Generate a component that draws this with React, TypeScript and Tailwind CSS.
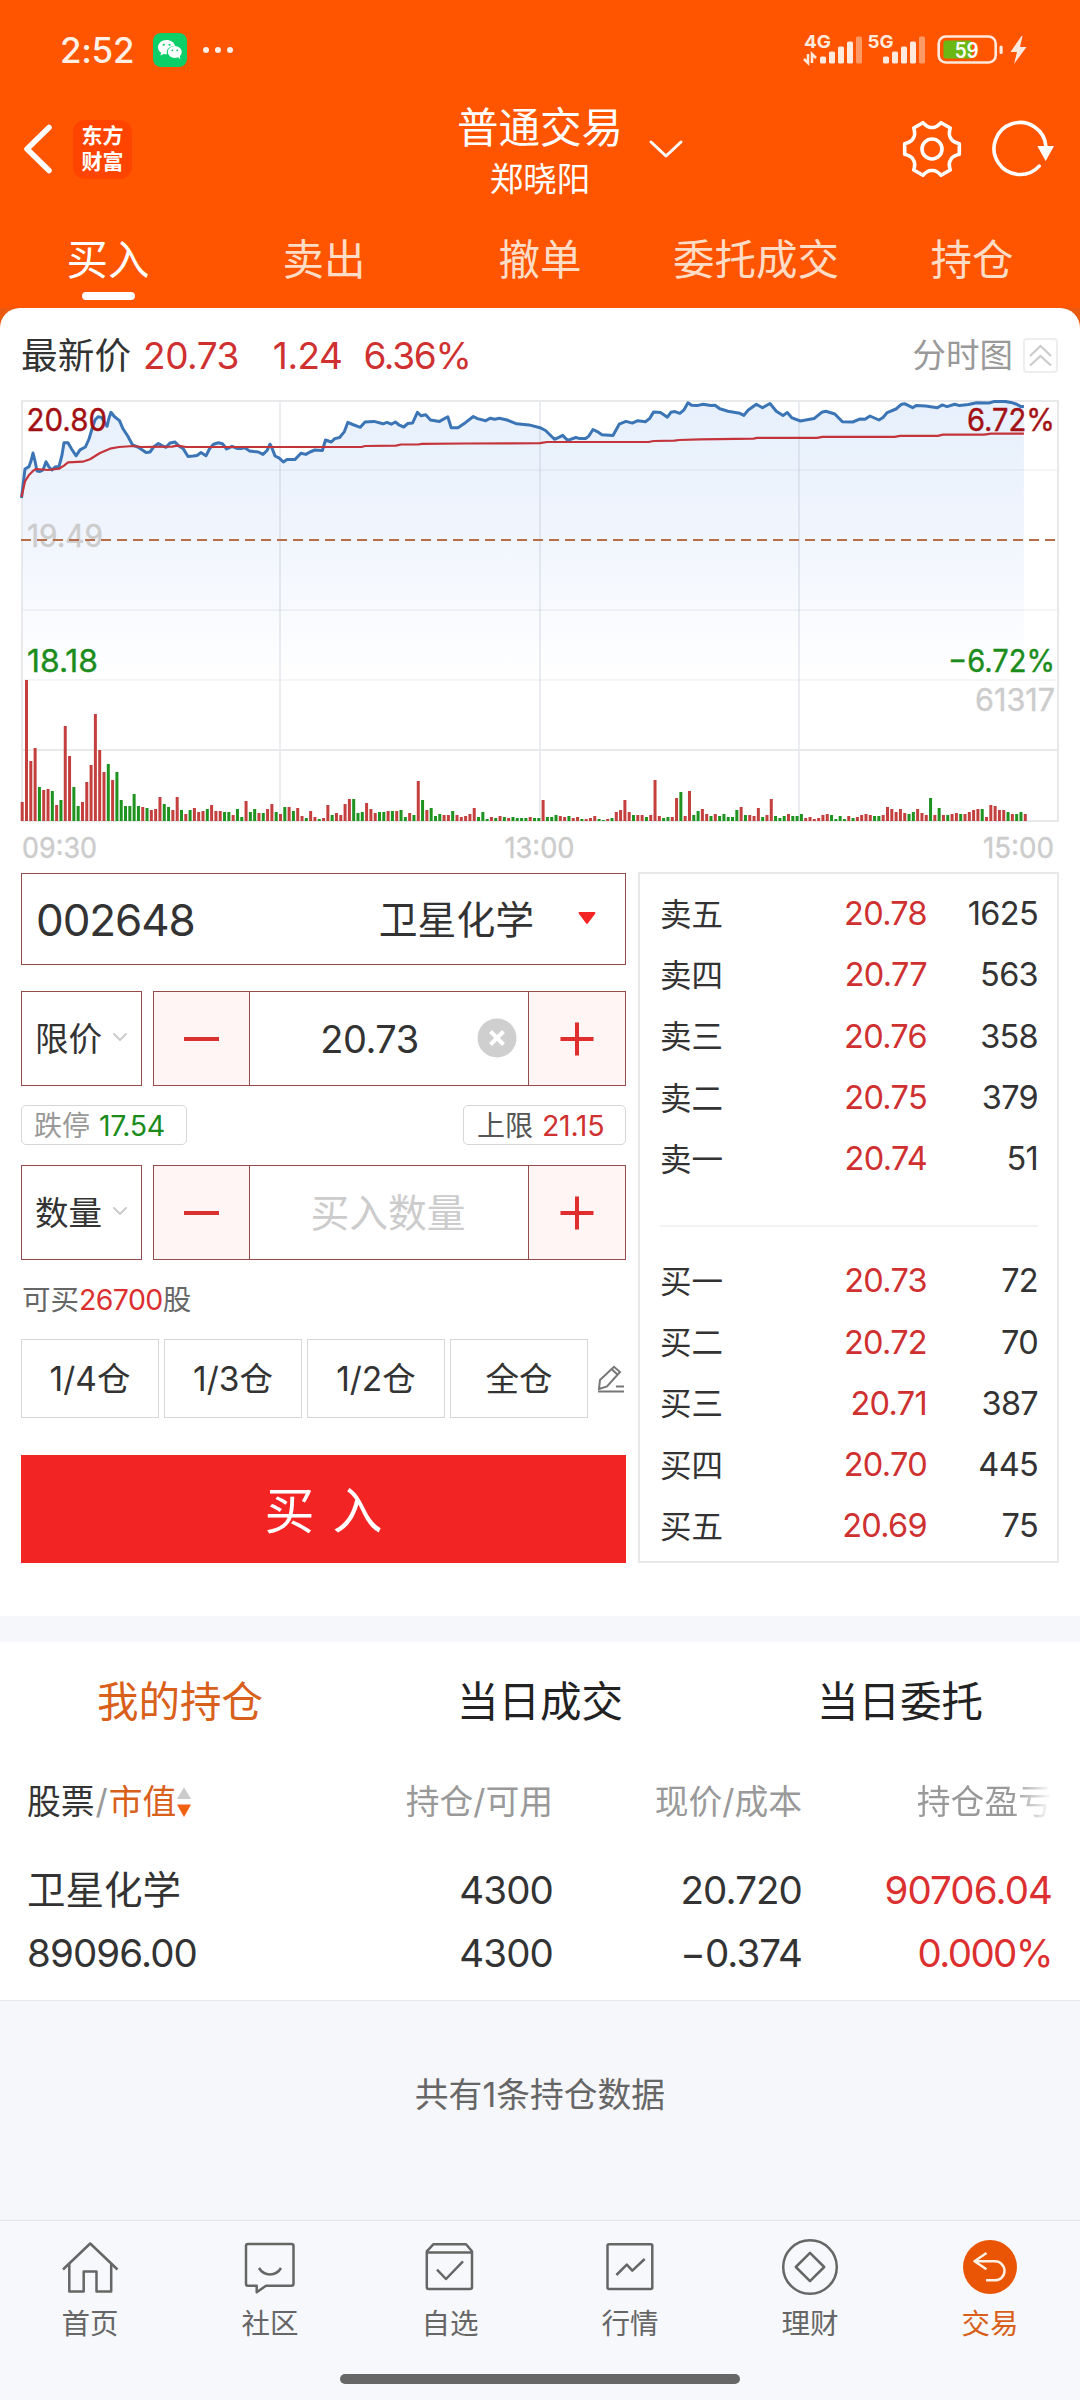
import React, { useState } from 'react';
import clsx from 'clsx';

interface Quote {
  label: string;
  price: string;
  volume: string;
}

const TABS = ['买入', '卖出', '撤单', '委托成交', '持仓'];

const SELLS: Quote[] = [
  { label: '卖五', price: '20.78', volume: '1625' },
  { label: '卖四', price: '20.77', volume: '563' },
  { label: '卖三', price: '20.76', volume: '358' },
  { label: '卖二', price: '20.75', volume: '379' },
  { label: '卖一', price: '20.74', volume: '51' },
];

const BUYS: Quote[] = [
  { label: '买一', price: '20.73', volume: '72' },
  { label: '买二', price: '20.72', volume: '70' },
  { label: '买三', price: '20.71', volume: '387' },
  { label: '买四', price: '20.70', volume: '445' },
  { label: '买五', price: '20.69', volume: '75' },
];

const PRICE_LINE =
  '21.5,498 25,469 29,466.6 31,461 33,453 35,461 37,471 40,471.5 43,470 46,461.7 49,467 52,470 55,467 59,466.6 62,455 64,442.8 68,442.8 71.6,449 76,455.8 80,449.8 85.4,447 89,439 92.3,428 95,420 98,416.8 101.6,417.5 104.7,422.4 107,426.3 109,418 111,412.3 114.3,416.5 119.5,420.7 123,428.8 128,436.5 132.6,445 137.8,447 142,449.8 146,452.6 150,452 153.6,447 158.4,443.5 162,445.6 166,447.3 170,443 175,442 178.4,445.6 183,448.4 188,456.5 193,456 197,455.4 201,452.6 206,455.8 209.4,449 213.5,444.2 218.3,442.8 222.5,443.8 226.6,449 232,446.3 237,448.4 241,448.4 245,447.7 249.3,450.9 254,451.6 258.3,452 263,454.4 267,450.5 270,444.2 272,448 275,456 279.3,458.2 283.4,462 287,459.6 294.8,459.6 301,453.3 305.8,454.4 310,452 314.8,450 322.4,450.5 325.5,440 331.3,442 334.8,438.6 339.6,437.5 344.4,431.6 347.8,422.4 352.7,424.5 360.3,427.3 365,422 374,421.4 383,423.8 387,422.4 391.3,424.2 395.4,422 399.5,425.2 403.7,427 407.8,423.5 412.6,423 417.4,412.3 420.9,415.8 425.7,414.7 430.5,420 439.5,421.4 447.8,416.8 451.2,427.7 458,427.7 465.7,422.4 473.3,416.5 477.4,418.6 485.7,420.7 490.5,418.2 494.6,419.3 499.4,418.2 507,420 516.7,423.8 529,424.9 540,427.7 545.5,430.5 554.5,439.3 559.3,437.2 562.7,435.4 567.5,440.3 575.8,437.5 580,438.6 585.5,438.6 589,435.8 593,429.5 597.2,431.6 602,434.7 613,435.4 619.2,424.2 626,421.4 632.3,423.1 637.8,420.7 645.4,421.7 649.5,418.6 653.7,411.9 660.5,412.6 667.4,417.2 670.9,412.3 675,411.6 679.8,413.3 684,409.8 688,402.8 691.5,405.2 697,405.6 703.2,404.2 710.8,405.6 715,405.2 719.8,408.8 728,411.2 739.8,413.3 743.9,415.4 748,410.2 756.3,404.2 762.5,407.7 770,403.5 776.3,411.2 783,415.4 787.3,412.6 792,417.9 800.4,421 814,418.6 821.7,412.3 825.9,411.2 834.8,414 842.4,421.7 852.7,422 860.3,418.9 865,419.3 870,416 878.9,420 883,417.5 887.2,412.6 896,409 901.6,404.2 905,403.8 912.7,407.7 916,405.6 925.7,405.9 937.4,407.7 942.3,404.9 947,406.6 954.7,404.2 959.5,405.6 968.4,404.5 976.7,402.8 989,403 994.6,401.4 1005,401.4 1011,402.4 1016.7,404.2 1020.8,406.6 1023.9,406.6';

const AVERAGE_LINE =
  '21.5,497 25,481.4 29,475 33,470.9 36,469 48,470 59,468.7 64,465.6 68,462.4 82.7,461.7 90,459.3 100,453 110,448.7 119,447 134,446 141,447 172,446.6 177.4,445.6 186,447 361.6,447 365,446 396,445.6 401,444.5 418,444.5 422,443.8 465,443.5 540,443.2 547,442 648.5,442 653.7,441 674.3,440.7 679.5,440 700,439.3 753.5,438.6 757,437.9 817,437.9 822.4,436.8 894.7,436.8 900,435.8 937.8,435.8 943,434.7 984,434.7 991,433.7 1023.9,433.7';

// One bar per minute, positive = up (red), negative = down (green)
const VOLUMES = [
  19, 141, 60, 73, -34, 31, 32, -30, 16, -21, 95, 65, -34, -15, 19, 39, 56, 107, 71, 49,
  -57, 41, -49, -21, -15, -15, -27, -15, 14, -13, 11, 12, 24, -17, -14, 11, 24, -11, 7, -11,
  13, 9, 10, -12, 16, 10, 10, -9, -9, 6, -12, -4, 20, -9, -12, 8, -8, 12, 17, -9,
  7, -14, 14, -10, 13, 5, -3, 10, 4, -2, 3, 16, -6, 8, 6, 17, 22, -22, -8, -9,
  18, 12, 8, -9, -9, 10, -10, 10, -11, -4, 8, -6, 40, -21, 11, -13, -5, -7, 6, 6,
  -10, 6, 4, 5, 7, 13, -4, -9, -2, 4, -3, 5, -4, 3, -4, -3, -3, -3, 4, -3,
  -3, 21, -4, -4, -6, 5, 4, -5, 3, 4, -2, 2, 3, 5, -2, -1, 2, -3, 9, 11,
  21, 9, -6, 6, 6, -4, 6, 41, 5, -3, -4, 4, 23, -29, 5, 30, -6, -10, 12, 7,
  -5, 7, -5, -7, -4, -4, -11, 14, -6, 6, 5, 13, -4, 6, 22, -5, -3, -5, 7, -5,
  -5, -7, 3, 4, 2, 3, 6, 7, -6, -2, -5, -2, 5, -3, 4, 6, 7, 6, -5, -5,
  6, 14, 12, 9, 12, 8, -7, -9, 12, 8, 6, -23, 6, -13, 6, -6, 7, 8, -7, 7,
  9, 11, 12, -12, 4, 16, 15, 11, 11, -9, 7, -7, -9, 7,
];

function SignalBars({ x }: { x: number }) {
  return (
    <g>
      {[7, 12, 17, 22, 27].map((h, i) => (
        <rect key={h} x={x + i * 9} y={63.5 - h} width="6" height={h} rx="1.5" fill="#fff" opacity={i === 4 ? 0.4 : 0.88} />
      ))}
    </g>
  );
}

function StatusBar() {
  return (
    <div className="flex h-[100px] items-center justify-between pl-[60px] pr-[50px]">
      <div className="flex items-center">
        <span className="w-[93px] text-[35px] font-medium leading-[40px] tracking-[-0.3px] text-[#fff0e6]">2:52</span>
        <svg width="34" height="34" viewBox="0 0 34 34">
          <rect width="34" height="34" rx="8" fill="#0ccf67" />
          <path d="M13.5 7C8.8 7 5 10.2 5 14.2c0 2.3 1.2 4.2 3.2 5.5l-.8 2.8 3.2-1.6c1 .3 1.8.4 2.9.4h.6a6 6 0 0 1-.3-1.9c0-3.6 3.4-6.3 7.5-6.3h.8C21.3 9.5 17.8 7 13.5 7z" fill="#fff" />
          <ellipse cx="21.8" cy="19" rx="7" ry="5.9" fill="#fff" />
          <path d="M24 23l3.2 3.2-.5-4z" fill="#fff" />
          <g fill="#0ccf67">
            <circle cx="10.7" cy="11.8" r="1.1" />
            <circle cx="16.5" cy="11.8" r="1.1" />
            <circle cx="19.4" cy="17.3" r="0.9" />
            <circle cx="24.2" cy="17.3" r="0.9" />
          </g>
        </svg>
        <div className="ml-[16px] flex gap-[6px]">
          <i className="h-[6px] w-[6px] rounded-full bg-[#fff0e6]" />
          <i className="h-[6px] w-[6px] rounded-full bg-[#fff0e6]" />
          <i className="h-[6px] w-[6px] rounded-full bg-[#fff0e6]" />
        </div>
      </div>
      <svg width="230" height="40" viewBox="800 30 230 40" className="font-bold">
        <text x="804" y="48" fontSize="18" fill="#ffe9dc" textLength="27" lengthAdjust="spacingAndGlyphs">4G</text>
        <path d="M808 54v9l-4-4M812 63v-9l4 4" fill="none" stroke="#ffe9dc" strokeWidth="2.5" />
        <SignalBars x={820} />
        <text x="867.5" y="48" fontSize="18" fill="#ffe9dc" textLength="26" lengthAdjust="spacingAndGlyphs">5G</text>
        <SignalBars x={883} />
        <rect x="938.7" y="36.5" width="57" height="26" rx="7" fill="none" stroke="#ffe9dc" strokeWidth="2.6" />
        <rect x="943.5" y="40.5" width="28.5" height="18" rx="2.5" fill="#6ab814" />
        <rect x="999.5" y="45.5" width="3.2" height="8.5" rx="1.5" fill="#ffe9dc" />
        <text x="966.7" y="57.5" fontSize="21" fontWeight="600" fill="#fff" textAnchor="middle" textLength="24" lengthAdjust="spacingAndGlyphs">59</text>
        <path d="M1021.5 36l-11 16h6.5l-3 12 12.500-17h-6.500l2.500-11z" fill="#ffe9dc" />
      </svg>
    </div>
  );
}

function polar(r: number, deg: number) {
  const a = (deg * Math.PI) / 180;
  return `${(30 + r * Math.cos(a)).toFixed(2)} ${(30 + r * Math.sin(a)).toFixed(2)}`;
}

// six blunt teeth with a soft dip between them
const GEAR_PATH =
  [0, 60, 120, 180, 240, 300]
    .map((t, i) => `${i === 0 ? 'M' : 'L'}${polar(27.8, t - 11)} L${polar(27.8, t + 11)} C${polar(23.5, t + 16)} ${polar(21.3, t + 22)} ${polar(21.6, t + 30)} C${polar(21.3, t + 38)} ${polar(23.5, t + 44)} ${polar(27.8, t + 49)}`)
    .join(' ') + 'Z';

function Header({ tab, onTab }: { tab: string; onTab: (t: string) => void }) {
  return (
    <header className="h-[308px] bg-[#ff5500] text-white">
      <StatusBar />
      <div className="grid h-[98px] grid-cols-[1fr_auto_1fr] grid-rows-[98px] items-center">
        <div className="flex items-center pl-[22px]">
          <svg width="32" height="52" viewBox="0 0 32 52" fill="none" stroke="#fff" strokeWidth="5.5" strokeLinecap="round" strokeLinejoin="round">
            <path d="M27 4.5L5 26l22 21.5" />
          </svg>
          <div className="ml-[19px] flex h-[59px] w-[59px] flex-col items-center justify-center rounded-[12px] bg-[#ff4400] text-[21px] font-bold leading-[26px]">
            <span>东方</span>
            <span>财富</span>
          </div>
        </div>
        <div className="flex flex-col items-center pt-[8px]">
          <span className="text-[41.5px] leading-[52px]">普通交易</span>
          <span className="text-[33.5px] leading-[50px]">郑晓阳</span>
        </div>
        <div className="flex items-center justify-between pl-[25px] pr-[20px]">
          <svg width="36" height="20" viewBox="0 0 36 20" fill="none" stroke="#fff" strokeWidth="3" strokeLinecap="round" strokeLinejoin="round">
            <path d="M3 3l15 14L33 3" />
          </svg>
          <div className="flex items-center gap-[28px]">
            <svg width="60" height="60" viewBox="0 0 60 60" fill="none" stroke="#fff" strokeWidth="3.6" strokeLinejoin="round">
              <path d={GEAR_PATH} />
              <circle cx="30" cy="30" r="10" />
            </svg>
            <svg width="70" height="60" viewBox="0 0 70 60">
              <path d="M56 28A26 26 0 1 0 49.2 47.1" fill="none" stroke="#fff" strokeWidth="3.6" strokeLinecap="round" />
              <path d="M47.3 27H64l-8.300 15z" fill="#fff" />
            </svg>
          </div>
        </div>
      </div>
      <nav className="grid grid-cols-5">
        {TABS.map((t) => (
          <button key={t} onClick={() => onTab(t)} className="flex flex-col items-center pt-[36px]">
            <span className={clsx('text-[41.5px] leading-[52px]', t === tab ? 'text-white' : 'text-[#ffdcc6]')}>{t}</span>
            {t === tab && <i className="mt-[6px] h-[8px] w-[53px] rounded-full bg-white" />}
          </button>
        ))}
      </nav>
    </header>
  );
}

function IntradayChart() {
  return (
    <svg width="1080" height="465" viewBox="0 400 1080 465" className="block">
      <defs>
        <linearGradient id="area" x1="0" y1="401" x2="0" y2="680" gradientUnits="userSpaceOnUse">
          <stop offset="0" stopColor="#e6f0fc" />
          <stop offset="0.5" stopColor="#f1f5fd" />
          <stop offset="1" stopColor="#ffffff" />
        </linearGradient>
      </defs>
      <polygon points={`21.5,680 ${PRICE_LINE} 1023.9,680`} fill="url(#area)" />
      <g stroke="#9aa4b8" strokeWidth="2">
        <path d="M22 470H1058M22 610H1058M22 680H1058" strokeOpacity="0.11" />
        <path d="M280 401V821M540 401V821M799 401V821" strokeOpacity="0.2" />
      </g>
      <path d="M22 750H1058M22 401H1058V821H22Z" fill="none" stroke="#e8e9eb" strokeWidth="2" />
      <g fontSize="31" strokeWidth="0.4">
        <text x="27" y="547" fill="#cccccc" stroke="#cccccc" textLength="76" lengthAdjust="spacingAndGlyphs">19.49</text>
        <text x="27" y="672" fill="#1b8c1b" stroke="#1b8c1b" textLength="71" lengthAdjust="spacingAndGlyphs">18.18</text>
        <text x="1055" y="672" fill="#1b8c1b" stroke="#1b8c1b" textAnchor="end" textLength="107" lengthAdjust="spacingAndGlyphs">−6.72%</text>
        <text x="1055" y="711" fill="#cccccc" stroke="#cccccc" textAnchor="end" textLength="80" lengthAdjust="spacingAndGlyphs">61317</text>
      </g>
      <path d="M21 540H1056" stroke="#b96e4b" strokeWidth="2" strokeDasharray="10 6" />
      <polyline points={PRICE_LINE} fill="none" stroke="#3b75b5" strokeWidth="3" strokeLinejoin="round" />
      <polyline points={AVERAGE_LINE} fill="none" stroke="#c4343a" strokeWidth="2.2" strokeLinejoin="round" />
      <g fontSize="31" fill="#a31014" stroke="#a31014" strokeWidth="0.4">
        <text x="26.5" y="431" textLength="80.5" lengthAdjust="spacingAndGlyphs">20.80</text>
        <text x="1055" y="431" textAnchor="end" textLength="88" lengthAdjust="spacingAndGlyphs">6.72%</text>
      </g>
      {VOLUMES.map((v, i) => (
        <rect key={i} x={20.7 + i * 4.305} y={821 - Math.abs(v)} width="3" height={Math.abs(v)} fill={v > 0 ? '#c4403f' : '#1f931f'} />
      ))}
      <g fontSize="29" fill="#cccccc" stroke="#cccccc" strokeWidth="0.4">
        <text x="22" y="858" textLength="75" lengthAdjust="spacingAndGlyphs">09:30</text>
        <text x="539.5" y="858" textAnchor="middle" textLength="70" lengthAdjust="spacingAndGlyphs">13:00</text>
        <text x="1054" y="858" textAnchor="end" textLength="71" lengthAdjust="spacingAndGlyphs">15:00</text>
      </g>
    </svg>
  );
}

function Stepper({ label, children }: { label: string; children: React.ReactNode }) {
  return (
    <div className="flex h-[95px] gap-[11px]">
      <div className="flex w-[121px] items-center border border-[#944b49] pl-[13px]">
        <span className="pt-px text-[33.5px] leading-[40px]">{label}</span>
        <svg width="16" height="10" viewBox="0 0 16 10" className="mb-[3px] ml-[10px]" fill="none" stroke="#cccccc" strokeWidth="2" strokeLinecap="round" strokeLinejoin="round">
          <path d="M2 2l6 6 6-6" />
        </svg>
      </div>
      <div className="flex flex-1 border border-[#944b49]">
        <button className="flex w-[96px] items-center justify-center border-r border-[#944b49] bg-[#fff5f4]">
          <i className="mt-px h-[4px] w-[35px] bg-[#d93030]" />
        </button>
        <div className="relative flex flex-1 items-center justify-center">{children}</div>
        <button className="flex w-[97px] items-center justify-center border-l border-[#944b49] bg-[#fff5f4]">
          <svg width="34" height="34" viewBox="0 0 34 34" className="mt-px" stroke="#e02d2d" strokeWidth="4">
            <path d="M17 0.5v33M0.5 17h33" />
          </svg>
        </button>
      </div>
    </div>
  );
}

function OrderForm() {
  return (
    <div className="w-[605px] pt-px text-[#333333]">
      <div className="flex h-[92px] items-center border border-[#944b49] pl-[14px] pr-[29px]">
        <span className="flex-1 pt-[2px] text-[44px] tracking-[-1.1px]">002648</span>
        <span className="pt-[3px] text-[38.8px]">卫星化学</span>
        <svg width="18" height="12" viewBox="0 0 18 12" className="mb-[2px] ml-[44px]">
          <path d="M1.5 0h15a1 1 0 0 1 .8 1.6L10 11.3a1.3 1.3 0 0 1-2 0L.7 1.6A1 1 0 0 1 1.5 0z" fill="#f22424" />
        </svg>
      </div>

      <div className="mt-[26px]">
        <Stepper label="限价">
          <span className="pr-[39px] pt-px text-[38px] tracking-[-0.5px]">20.73</span>
          <svg width="40" height="40" viewBox="0 0 40 40" className="absolute right-[11px] top-[26px]">
            <circle cx="20" cy="20" r="19.5" fill="#cfcfcf" />
            <path d="M13.5 13.5l13 13M26.5 13.5l-13 13" stroke="#fff" strokeWidth="4" />
          </svg>
        </Stepper>
      </div>

      <div className="mt-[19px] flex h-[40px] justify-between text-[28px] leading-[40px]">
        <div className="flex w-[166px] gap-[9px] rounded-[5px] border border-[#d3d7d7] pl-[12px]">
          <span className="text-[#999999]">跌停</span>
          <span className="text-[28.5px] tracking-[-0.4px] text-[#1b8c1b]">17.54</span>
        </div>
        <div className="flex w-[163px] gap-[9px] rounded-[5px] border border-[#d3d7d7] pl-[13px]">
          <span className="text-[#555555]">上限</span>
          <span className="text-[28.5px] tracking-[-0.3px] text-[#cf3030]">21.15</span>
        </div>
      </div>

      <div className="mt-[20px]">
        <Stepper label="数量">
          <span className="pr-[2px] pt-[2px] text-[38.8px] text-[#cccccc]">买入数量</span>
        </Stepper>
      </div>

      <div className="flex h-[79px] items-center pl-px pt-[2px] text-[28.5px] text-[#666666]">
        可买<span className="tracking-[-0.6px] text-[#dc2f2f]">26700</span>股
      </div>

      <div className="flex h-[79px] items-center gap-[5px]">
        {['1/4', '1/3', '1/2', '全'].map((part) => (
          <button key={part} className="flex h-full w-[138px] items-center justify-center border border-[#d5d8d8] pt-px text-[33.5px]">
            {part}仓
          </button>
        ))}
        <svg width="28" height="28" viewBox="0 0 28 28" className="ml-[4px]" fill="none" stroke="#777777" strokeWidth="2">
          <path d="M2 24l1-9L17 1.8l6 5.2L10 21.5zM15 4.5l6 5.5" />
          <path d="M1 26.5h26M19 21.5h8" />
        </svg>
      </div>

      <button className="mt-[37px] flex h-[108px] w-full items-center justify-center bg-[#f22424] pt-[4px] text-[50px] text-white [word-spacing:4px]">
        买 入
      </button>
    </div>
  );
}

function QuoteRow({ quote }: { quote: Quote }) {
  return (
    <div className="flex h-[61.2px] items-center text-[32.5px] tracking-[-0.7px] text-[#333333]">
      <span className="flex-1 text-[31.5px] tracking-normal">{quote.label}</span>
      <span className="text-[#cf3030]">{quote.price}</span>
      <span className="w-[111px] text-right">{quote.volume}</span>
    </div>
  );
}

function OrderBook() {
  return (
    <div className="h-[691px] w-[421px] border-2 border-[#e8e8ea] pl-[20px] pr-[19px] pt-[10px]">
      {SELLS.map((q) => (
        <QuoteRow key={q.label} quote={q} />
      ))}
      <div className="flex h-[61.2px] items-center pt-[10px]">
        <i className="h-[2px] w-full bg-[#f3f3f4]" />
      </div>
      {BUYS.map((q) => (
        <QuoteRow key={q.label} quote={q} />
      ))}
    </div>
  );
}

function Holdings() {
  return (
    <section className="h-[359px] border-b border-[#e6e8ea] bg-white">
      <div className="grid h-[118px] grid-cols-3 items-center pt-[3px] text-center text-[41.5px] text-[#222222]">
        <span className="text-[#d9601a]">我的持仓</span>
        <span>当日成交</span>
        <span>当日委托</span>
      </div>
      <div className="grid h-[82px] grid-cols-[336px_190px_249px_250px] items-center pl-[27px] pt-[2px] text-right text-[33.8px] text-[#999999]">
        <div className="flex items-center">
          <span className="text-[#333333]">股票</span>
          <span className="px-px">/</span>
          <span className="text-[#d9601a]">市值</span>
          <svg width="14" height="30" viewBox="0 0 14 30" className="ml-px">
            <path d="M7 0l7 12H0z" fill="#cccccc" />
            <path d="M0 17.5h14L7 30z" fill="#f26011" />
          </svg>
        </div>
        <span>持仓/可用</span>
        <span>现价/成本</span>
        <span className="bg-gradient-to-r from-[#999999] from-[84%] to-white bg-clip-text text-transparent">持仓盈亏</span>
      </div>
      <div className="mt-[17px] grid grid-cols-[336px_190px_249px_250px] pl-[27px] text-right text-[38.5px] leading-[63px] tracking-[-0.9px] text-[#333333]">
        <span className="text-left tracking-normal">卫星化学</span>
        <span>4300</span>
        <span>20.720</span>
        <span className="text-[#dc2f2f]">90706.04</span>
        <span className="text-left">89096.00</span>
        <span>4300</span>
        <span>−0.374</span>
        <span className="tracking-[-1.6px] text-[#dc2f2f]">0.000%</span>
      </div>
    </section>
  );
}

const NAV_ITEMS = [
  {
    label: '首页',
    icon: (
      <>
        <path d="M3 32.5L30.2 6.5 57.5 32.5" />
        <path d="M9.3 27v27.500h14.400v-20h12.800v20h14.700V27" />
      </>
    ),
  },
  {
    label: '社区',
    icon: (
      <>
        <path d="M8 7h43.5a2 2 0 0 1 2 2v37.7a2 2 0 0 1-2 2H26l-9.3 6.5v-6.5H8a2 2 0 0 1-2-2V9a2 2 0 0 1 2-2z" />
        <path d="M19 31c5 8.5 17 8.5 22 0" />
      </>
    ),
  },
  {
    label: '自选',
    icon: (
      <>
        <path d="M6.8 14.3L13.3 7.3H46l6 7V50a2 2 0 0 1-2 2H8.8a2 2 0 0 1-2-2zM7 15.5h45" />
        <path d="M17 32.7l9 9.3 17-17.7" />
      </>
    ),
  },
  {
    label: '行情',
    icon: (
      <>
        <rect x="7.5" y="7.3" width="44.8" height="44.7" rx="1.5" />
        <path d="M16.4 38l10.4-10.3 5.5 6L44.7 22" />
      </>
    ),
  },
  {
    label: '理财',
    icon: (
      <>
        <circle cx="30" cy="30" r="26.8" />
        <path d="M30 15.8L44.2 30 30 44.2 15.8 30z" />
      </>
    ),
  },
  {
    label: '交易',
    icon: (
      <>
        <circle cx="30" cy="30" r="27" fill="#e95504" stroke="none" />
        <path d="M26.5 16L14.5 24.3l12 8M14.5 24.3H35a9.5 9.5 0 0 1 0 19h-9" stroke="#fff0e6" />
      </>
    ),
  },
];

function BottomNav() {
  return (
    <footer className="h-[180px] border-t border-[#e2e4e7] bg-[#f7f8fb]">
      <div className="grid grid-cols-6 pt-[16px]">
        {NAV_ITEMS.map((item) => (
          <button key={item.label} className={clsx('flex flex-col items-center', item.label === '交易' ? 'text-[#d9601a]' : 'text-[#666666]')}>
            <svg width="60" height="60" viewBox="0 0 60 60" fill="none" stroke="#666666" strokeWidth="2.5" strokeLinejoin="round">
              {item.icon}
            </svg>
            <span className="mt-[7px] text-[28.5px] leading-[40px]">{item.label}</span>
          </button>
        ))}
      </div>
      <i className="mx-auto mt-[30px] block h-[10px] w-[400px] rounded-full bg-[#676767]" />
    </footer>
  );
}

export default function App() {
  const [tab, setTab] = useState('买入');

  return (
    <div className="h-[2400px] w-[1080px] overflow-hidden bg-[#f6f7fa] font-['Inter','Noto_Sans_CJK_SC',sans-serif]">
      <Header tab={tab} onTab={setTab} />
      <div className="bg-[#e95a10]">
        <main className="h-[1308px] rounded-t-[20px] bg-white">
          <div className="flex h-[92px] items-center pl-[21px] pr-[22px] pt-[3px] text-[37px] tracking-[-0.5px] text-[#cf3030]">
            <span className="text-[36.7px] tracking-normal text-[#333333]">最新价</span>
            <span className="ml-[12px]">20.73</span>
            <span className="ml-[34px]">1.24</span>
            <span className="ml-[21px] tracking-[-1.3px]">6.36%</span>
            <span className="ml-auto text-[33.5px] tracking-normal text-[#999999]">分时图</span>
            <svg width="35" height="35" viewBox="0 0 35 35" className="ml-[10px]" fill="none">
              <rect x="1" y="1" width="33" height="33" rx="3" stroke="#eeeeee" strokeWidth="2" />
              <path d="M7 18l10.5-10L28 18M7 27.5l10.5-9.5L28 27.5" stroke="#cccccc" strokeWidth="2.2" />
            </svg>
          </div>
          <IntradayChart />
          <div className="flex gap-[12px] pl-[21px] pt-[7px]">
            <OrderForm />
            <OrderBook />
          </div>
        </main>
      </div>
      <div className="h-[26px] bg-[#f5f7fa]" />
      <Holdings />
      <div className="flex h-[219px] justify-center pt-[69px] text-[33.8px] leading-[50px] text-[#666666]">共有1条持仓数据</div>
      <BottomNav />
    </div>
  );
}
